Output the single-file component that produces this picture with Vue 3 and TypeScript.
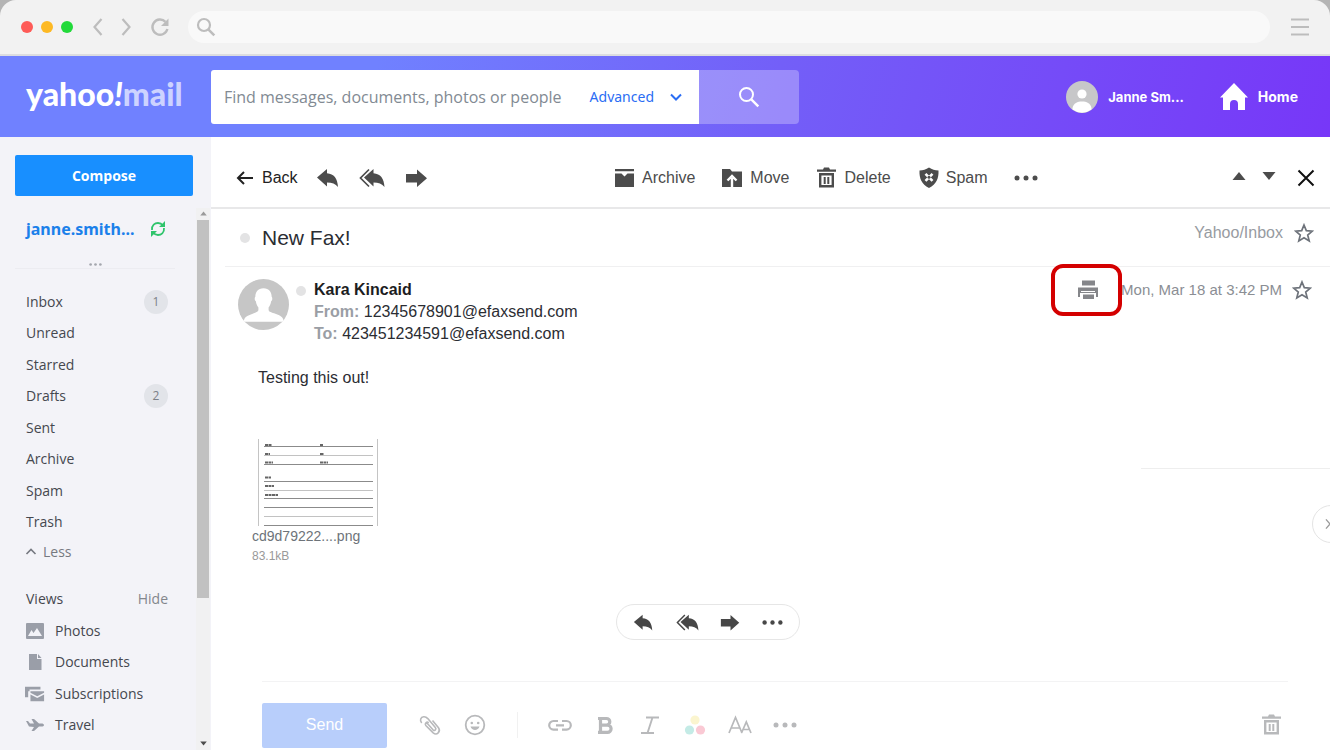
<script setup lang="ts">
import { ref } from 'vue'

interface Folder {
  name: string
  count?: number
}

interface Tool {
  icon: string
  label: string
}

const folders: Folder[] = [
  { name: 'Inbox', count: 1 },
  { name: 'Unread' },
  { name: 'Starred' },
  { name: 'Drafts', count: 2 },
  { name: 'Sent' },
  { name: 'Archive' },
  { name: 'Spam' },
  { name: 'Trash' },
]

const views: Tool[] = [
  { icon: 'photo', label: 'Photos' },
  { icon: 'document', label: 'Documents' },
  { icon: 'subscriptions', label: 'Subscriptions' },
  { icon: 'plane', label: 'Travel' },
]

const replyTools: Tool[] = [
  { icon: 'reply', label: 'Reply' },
  { icon: 'reply-all', label: 'Reply all' },
  { icon: 'forward', label: 'Forward' },
]

const actions: Tool[] = [
  { icon: 'archive', label: 'Archive' },
  { icon: 'move', label: 'Move' },
  { icon: 'trash', label: 'Delete' },
  { icon: 'spam', label: 'Spam' },
]

const formatTools: Tool[] = [
  { icon: 'link', label: 'Insert link' },
  { icon: 'bold', label: 'Bold' },
  { icon: 'italic', label: 'Italic' },
  { icon: 'colors', label: 'Colors' },
  { icon: 'font', label: 'Font' },
  { icon: 'dots', label: 'More formatting' },
]

const query = ref('')
const address = ref('')
</script>

<template>
  <div class="window">
    <svg class="sprite" aria-hidden="true">
      <symbol id="chev-left" viewBox="0 0 24 24"><path d="M15.500 4 8.500 12l7 8" fill="none" stroke="currentColor" stroke-width="2.200" /></symbol>
      <symbol id="chev-right" viewBox="0 0 24 24"><path d="m8.500 4 7 8-7 8" fill="none" stroke="currentColor" stroke-width="2.200" /></symbol>
      <symbol id="chev-down" viewBox="0 0 24 24"><path d="m7 9.500 5 5 5-5" fill="none" stroke="currentColor" stroke-width="2" /></symbol>
      <symbol id="chev-up" viewBox="0 0 12 12"><path d="m1.500 8 4.500-4.500L10.500 8" fill="none" stroke="currentColor" stroke-width="1.600" /></symbol>
      <symbol id="reload" viewBox="0 0 24 24">
        <path d="M17.500 6.800A7.600 7.600 0 1 0 19.400 14" fill="none" stroke="currentColor" stroke-width="2.400" />
        <path d="M20.500 3.500v7.500H13z" fill="currentColor" />
      </symbol>
      <symbol id="search" viewBox="0 0 24 24">
        <circle cx="9.500" cy="9.500" r="6.500" fill="none" stroke="currentColor" stroke-width="2" />
        <path d="m14.300 14.300 7 7" fill="none" stroke="currentColor" stroke-width="2.400" />
      </symbol>
      <symbol id="search-bold" viewBox="0 0 20 20">
        <circle cx="8" cy="8" r="6" fill="none" stroke="currentColor" stroke-width="2.200" />
        <path d="m12.300 12.300 6 6" fill="none" stroke="currentColor" stroke-width="2.600" />
      </symbol>
      <symbol id="menu" viewBox="0 0 24 24"><path d="M3 4.500h18M3 12h18M3 19.500h18" stroke="currentColor" stroke-width="2" /></symbol>
      <symbol id="home" viewBox="0 0 28 28"><path d="M14 0 28 14.500h-3V27h-7v-6a4 4 0 0 0-8 0v6H3V14.500H0z" fill="currentColor" /></symbol>
      <symbol id="person" viewBox="0 0 32 32">
        <circle cx="16" cy="16" r="16" fill="#c7c7c9" />
        <circle cx="16" cy="13" r="4.600" fill="#fff" />
        <path d="M6.500 28.500V27c1-5 5-6.500 9.500-6.500s8.500 1.500 9.500 6.500v1.500a16 16 0 0 1-19 0z" fill="#fff" />
      </symbol>
      <symbol id="sender" viewBox="0 0 50 50">
        <circle cx="25" cy="25" r="25" fill="#c6c6c6" />
        <path d="M25 9c5.500 0 8 3.500 8 8.500 1 1 .8 3.500-.5 4.200-.4 2.700-1.300 4.600-2.500 6.300v2.500c0 3.500 13 3 14.500 9.500q0 2-1.500 2H7Q5.500 42 6 40c1.500-6 14-6 14-9.500V28c-1.200-1.700-2.100-3.600-2.500-6.300-1.300-.7-1.500-3.200-.5-4.200C17 12.500 19.500 9 25 9z" fill="#fff" />
      </symbol>
      <symbol id="sync" viewBox="0 0 18 18">
        <path d="M3 10C2.500 5 6 3 9 3c2.200 0 3.800 1 5 2.500M15 8c.5 5-3 7-6 7-2.200 0-3.800-1-5-2.500" fill="none" stroke="currentColor" stroke-width="1.800" />
        <path d="M16 1v6h-6zM2 17v-6h6z" fill="currentColor" />
      </symbol>
      <symbol id="photo" viewBox="0 0 20 20">
        <rect x="1" y="2" width="18" height="16" rx="1" fill="currentColor" />
        <path d="m3 15 3.500-6 2 3L12 7l5 8z" fill="#f3f3f8" />
      </symbol>
      <symbol id="document" viewBox="0 0 20 20"><path d="M4 2h8v5h4.500v11H4zM13 2l3.500 4H13z" fill="currentColor" /></symbol>
      <symbol id="subscriptions" viewBox="0 0 22 20">
        <path d="M0 2h17v3H5v2H3.500v6.500H0zM6 7h15v1.500l-7.500 4-7.500-4zM6 10.500l7.500 4 7.500-4V18H6z" fill="currentColor" />
      </symbol>
      <symbol id="plane" viewBox="0 0 20 20"><path d="M1 6h2l2 2.500h4L6.500 4H9l5 4.500h3.500q1.500.5 1.500 1.500t-1.500 1.500H14L9 16H6.500L9 12 4 11.500z" fill="currentColor" /></symbol>
      <symbol id="back" viewBox="0 0 18 18"><path d="M8 3 2 9l6 6M2 9h15" fill="none" stroke="currentColor" stroke-width="2" /></symbol>
      <symbol id="reply" viewBox="0 0 24 24"><path d="M1 11.500 11 3v4.200c7 .6 10.500 5 11 13.800-2.400-3.400-6-4.600-11-4.600v4z" fill="currentColor" /></symbol>
      <symbol id="reply-all" viewBox="0 0 28 24">
        <path d="M11 3.500 2.500 12l8.500 8.500" fill="none" stroke="currentColor" stroke-width="1.700" />
        <path d="M6 11.500 15.500 3v4.200c7 .6 10.500 5 11 13.800-2.400-3.400-6-4.600-11-4.600v4z" fill="currentColor" />
      </symbol>
      <symbol id="forward" viewBox="0 0 24 24"><path d="M1 8h11V3.500l10 8.700L12 21v-4.500H1z" fill="currentColor" /></symbol>
      <symbol id="archive" viewBox="0 0 24 24"><path d="M2 3h19v2.200H2zM2 7.500h6.500l3 3 3-3H21V21H2z" fill="currentColor" /></symbol>
      <symbol id="move" viewBox="0 0 24 24">
        <path d="M1 3h8l2 2.500h10V21H1z" fill="currentColor" />
        <path d="M11 21v-9M6.500 14.500 11 10l4.500 4.500" fill="none" stroke="#fff" stroke-width="2.400" />
      </symbol>
      <symbol id="trash" viewBox="0 0 24 24">
        <path d="M2 3.500h6l1-2h5l1 2h6v2.200H2z" fill="currentColor" />
        <path d="M5.200 8.200h12.600v12H5.200z" fill="none" stroke="currentColor" stroke-width="2.400" />
        <path d="M9.700 11v7M13.300 11v7" stroke="currentColor" stroke-width="2" />
      </symbol>
      <symbol id="spam" viewBox="0 0 24 24">
        <path d="M12 1.500c3 2 6 2.800 9.500 3 .3 8-2 13.500-9.500 17.500-7.500-4-9.800-9.500-9.500-17.500 3.500-.2 6.500-1 9.500-3z" fill="currentColor" />
        <path d="m8.500 7.800 7 7m0-7-7 7" stroke="#fff" stroke-width="2.600" />
        <circle cx="12" cy="11.300" r="1.500" fill="currentColor" />
      </symbol>
      <symbol id="dots" viewBox="0 0 24 24"><g fill="currentColor"><circle cx="3" cy="12" r="2.500" /><circle cx="12" cy="12" r="2.500" /><circle cx="21" cy="12" r="2.500" /></g></symbol>
      <symbol id="tri-up" viewBox="0 0 14 10"><path d="M7 1 13.500 9H.5z" fill="currentColor" /></symbol>
      <symbol id="tri-down" viewBox="0 0 14 10"><path d="M7 9 13.500 1H.5z" fill="currentColor" /></symbol>
      <symbol id="close" viewBox="0 0 18 18"><path d="m1.500 1.500 15 15m0-15-15 15" stroke="currentColor" stroke-width="2" /></symbol>
      <symbol id="star" viewBox="0 0 20 20"><path d="m10 2 2.300 5.600 6 .5-4.600 3.900 1.500 5.900L10 14.700 4.800 17.900l1.500-5.900L1.700 8.100l6-.5z" fill="none" stroke="currentColor" stroke-width="1.700" /></symbol>
      <symbol id="print" viewBox="0 0 22 22">
        <path d="M5 1.500h13v5H5zM1 8.500h20V18h-2v-6H3v6H1z" fill="currentColor" />
        <path d="M3 10.500h16V14H3zM6 15.500h11V20H6z" fill="currentColor" />
        <path d="M4 12.500h14" stroke="#fff" />
      </symbol>
      <symbol id="clip" viewBox="0 0 24 24">
        <path d="m8.500 9.500 6.500 7.300c1.800 1.600 3.800-.4 2.300-2.300L9.800 5.600C7.300 2.800 3.600 3.400 2.700 6c-.5 1.500 0 2.800 1 4M14.500 7.500l6 7.200c2.600 3.800-1.700 8.200-5.300 5.100L7.800 12.500C6.300 10.500 8.700 8 10.700 9.800" fill="none" stroke="currentColor" stroke-width="1.600" />
      </symbol>
      <symbol id="smile" viewBox="0 0 24 24">
        <circle cx="12" cy="12" r="9.300" fill="none" stroke="currentColor" stroke-width="1.800" />
        <circle cx="8.800" cy="10" r="1.300" fill="currentColor" />
        <circle cx="15.200" cy="10" r="1.300" fill="currentColor" />
        <path d="M7.500 13.500h9c-1.200 4.600-7.800 4.600-9 0z" fill="currentColor" />
      </symbol>
      <symbol id="link" viewBox="0 0 24 24"><path d="M10 8H5.500a4.300 4.300 0 0 0 0 8.600H10M14 8h4.500a4.300 4.300 0 0 1 0 8.600H14M8 12.300h8" fill="none" stroke="currentColor" stroke-width="2.200" /></symbol>
      <symbol id="bold" viewBox="0 0 24 24"><path d="M5 5.500h8.500a3.300 3.300 0 0 1 0 6.600H7.500h7a3.600 3.600 0 0 1 0 7.200H5M7.500 5.500v13.500" fill="none" stroke="currentColor" stroke-width="3.200" /></symbol>
      <symbol id="italic" viewBox="0 0 24 24"><path d="M8 4.500h13M3 20h13M14.500 4.500 9.500 20" fill="none" stroke="currentColor" stroke-width="1.900" /></symbol>
      <symbol id="colors" viewBox="0 0 24 24">
        <circle cx="12" cy="7" r="4.600" fill="#fbf5cf" />
        <circle cx="6.500" cy="17" r="4.600" fill="#c4ebe6" />
        <circle cx="17.500" cy="17" r="4.600" fill="#fac9d4" />
      </symbol>
      <symbol id="font" viewBox="0 0 24 24"><path d="M1 20 7.500 4.500 14 20M3.200 15h8.600M13.500 20 18.300 9l4.700 11M15.200 16.500h6" fill="none" stroke="currentColor" stroke-width="1.700" /></symbol>
    </svg>

    <div class="chrome">
      <div class="lights"><i class="red"></i><i class="amber"></i><i class="green"></i></div>
      <button class="icon-btn nav" aria-label="Previous page"><svg><use href="#chev-left" /></svg></button>
      <button class="icon-btn nav" aria-label="Next page"><svg><use href="#chev-right" /></svg></button>
      <button class="icon-btn nav reload" aria-label="Reload"><svg><use href="#reload" /></svg></button>
      <label class="address">
        <svg><use href="#search-bold" /></svg>
        <input v-model="address" type="text" aria-label="Address" />
      </label>
      <button class="icon-btn nav" aria-label="Menu"><svg><use href="#menu" /></svg></button>
    </div>

    <header class="header">
      <a class="logo" href="#">yahoo<em>!</em><span>mail</span></a>
      <form class="search" @submit.prevent>
        <div class="search-box">
          <input v-model="query" type="text" aria-label="Search mail" placeholder="Find messages, documents, photos or people" />
          <button type="button" class="advanced">Advanced <svg><use href="#chev-down" /></svg></button>
        </div>
        <button class="search-btn" aria-label="Search"><svg><use href="#search" /></svg></button>
      </form>
      <nav class="user-nav">
        <a class="user" href="#"><svg class="face"><use href="#person" /></svg>Janne Sm...</a>
        <a href="#"><svg class="house"><use href="#home" /></svg>Home</a>
      </nav>
    </header>

    <div class="body">
      <aside class="sidebar">
        <button class="compose">Compose</button>
        <div class="side-scroll">
          <div class="side-content">
            <div class="account">
              <a href="#">janne.smith...</a>
              <button class="icon-btn sync" aria-label="Refresh"><svg><use href="#sync" /></svg></button>
            </div>
            <div class="divider"><svg><use href="#dots" /></svg></div>
            <ul class="rows folders">
              <li v-for="f in folders" :key="f.name">
                <a href="#">{{ f.name }}</a>
                <span v-if="f.count" class="count">{{ f.count }}</span>
              </li>
            </ul>
            <button class="less"><svg><use href="#chev-up" /></svg>Less</button>
            <div class="views-head"><span>Views</span><button>Hide</button></div>
            <ul class="rows views">
              <li v-for="v in views" :key="v.label">
                <a href="#"><svg><use :href="'#' + v.icon" /></svg>{{ v.label }}</a>
              </li>
            </ul>
          </div>
          <div class="scrollbar" aria-hidden="true">
            <svg class="up"><use href="#tri-up" /></svg>
            <div class="track"><div class="thumb"></div></div>
            <svg><use href="#tri-down" /></svg>
          </div>
        </div>
      </aside>

      <main class="main">
        <div class="toolbar">
          <div class="tools-left">
            <button class="back"><svg><use href="#back" /></svg>Back</button>
            <button v-for="t in replyTools" :key="t.icon" class="icon-btn" :class="t.icon" :aria-label="t.label">
              <svg><use :href="'#' + t.icon" /></svg>
            </button>
          </div>
          <div class="tools-mid">
            <button v-for="a in actions" :key="a.icon" class="action"><svg><use :href="'#' + a.icon" /></svg>{{ a.label }}</button>
            <button class="icon-btn" aria-label="More"><svg><use href="#dots" /></svg></button>
          </div>
          <div class="tools-right">
            <button class="icon-btn tri" aria-label="Previous message"><svg><use href="#tri-up" /></svg></button>
            <button class="icon-btn tri" aria-label="Next message"><svg><use href="#tri-down" /></svg></button>
            <button class="icon-btn close" aria-label="Close"><svg><use href="#close" /></svg></button>
          </div>
        </div>

        <div class="subject">
          <i class="dot"></i>
          <h1>New Fax!</h1>
          <span class="folder">Yahoo/Inbox</span>
          <button class="icon-btn star" aria-label="Star conversation"><svg><use href="#star" /></svg></button>
        </div>

        <article class="message">
          <div class="msg-head">
            <svg class="sender"><use href="#sender" /></svg>
            <i class="dot"></i>
            <div class="meta">
              <strong>Kara Kincaid</strong>
              <div><b>From:</b> 12345678901@efaxsend.com</div>
              <div><b>To:</b> 423451234591@efaxsend.com</div>
            </div>
            <div class="stamp">
              <button class="icon-btn print" aria-label="Print"><svg><use href="#print" /></svg></button>
              <time>Mon, Mar 18 at 3:42 PM</time>
              <button class="icon-btn star" aria-label="Star message"><svg><use href="#star" /></svg></button>
            </div>
          </div>
          <p class="text">Testing this out!</p>
          <figure class="attachment">
            <svg viewBox="0 0 120 87">
              <path d="M.5 0v87M119.500 0v87" stroke="#c4c4c4" />
              <path d="M6 7.500h109M6 25.500h109M6 42.500h109M6 59.500h109M6 68.500h109M6 86.500h109" stroke="#8b8b8b" />
              <path d="M6 16.500h109M6 51.500h109M6 77.500h109" stroke="#c2c2c2" />
              <path d="M7 6h7M62 6h3M7 15h5M62 15h4M7 23.500h8M62 23.500h8M7 38.500h6M7 47h9M7 56h13" stroke="#666" stroke-width="2" stroke-dasharray="3 .5" />
            </svg>
            <figcaption>cd9d79222....png<small>83.1kB</small></figcaption>
          </figure>
          <div class="pill">
            <button v-for="t in replyTools" :key="t.icon" class="icon-btn" :class="t.icon" :aria-label="t.label">
              <svg><use :href="'#' + t.icon" /></svg>
            </button>
            <button class="icon-btn" aria-label="More"><svg><use href="#dots" /></svg></button>
          </div>
        </article>

        <footer class="composer">
          <button class="send">Send</button>
          <button class="icon-btn" aria-label="Attach file"><svg><use href="#clip" /></svg></button>
          <button class="icon-btn" aria-label="Emoji"><svg><use href="#smile" /></svg></button>
          <span class="bar"></span>
          <button v-for="t in formatTools" :key="t.icon" class="icon-btn" :aria-label="t.label">
            <svg><use :href="'#' + t.icon" /></svg>
          </button>
          <button class="icon-btn discard" aria-label="Discard draft"><svg><use href="#trash" /></svg></button>
        </footer>

        <div class="panel-edge"></div>
        <button class="expand" aria-label="Show panel"><svg><use href="#chev-right" /></svg></button>
      </main>
    </div>
  </div>
</template>

<style>
body {
  margin: 0;
}
</style>

<style scoped>
.window {
  display: flex;
  flex-direction: column;
  height: 100vh;
  min-height: 750px;
  overflow: hidden;
  background: #b4b4b4;
  color: #2b2d33;
  font: 16px/22px "Liberation Sans", Arial, sans-serif;
}
.window *,
.window *::after {
  box-sizing: border-box;
}
.sprite {
  position: absolute;
  width: 0;
  height: 0;
}
button {
  display: flex;
  align-items: center;
  padding: 0;
  border: 0;
  background: none;
  color: inherit;
  font: inherit;
}
a {
  color: inherit;
  text-decoration: none;
}
input {
  min-width: 0;
  border: 0;
  padding: 0;
  background: none;
  outline: 0;
}
svg {
  display: block;
  flex: none;
}
.icon-btn {
  justify-content: center;
  flex: none;
}
.icon-btn svg {
  width: 24px;
  height: 24px;
}

/* browser frame */
.chrome {
  display: flex;
  align-items: center;
  flex: none;
  height: 56px;
  padding: 0 18px 0 21px;
  border-bottom: 2px solid #dcdde0;
  border-radius: 16px 16px 0 0;
  background: #f2f2f2;
  color: #bdbdbd;
}
.lights {
  display: flex;
  gap: 8px;
  margin-right: 13px;
}
.lights i {
  width: 12px;
  height: 12px;
  border-radius: 50%;
}
.red {
  background: #fe5b57;
}
.amber {
  background: #fdb924;
}
.green {
  background: #22da3a;
}
.nav {
  margin-right: 4px;
}
.reload {
  margin: 0 16px 0 6px;
}
.address {
  display: flex;
  align-items: center;
  flex: 1;
  height: 32px;
  margin-right: 18px;
  padding: 0 8px;
  border-radius: 16px;
  background: #f9f9f9;
}
.address svg {
  width: 20px;
  height: 20px;
}
.address input {
  flex: 1;
}
.chrome > .nav:last-child {
  margin: 0;
}

/* mail header */
.header {
  display: flex;
  align-items: center;
  flex: none;
  height: 81px;
  padding-right: 32px;
  background: linear-gradient(105deg, #7081ff 0%, #7081ff 28%, #735ff8 58%, #7737f8 100%);
  color: #fff;
}
.logo {
  width: 211px;
  margin-bottom: 6px;
  padding-left: 26px;
  font: 900 32px/36px Lato, sans-serif;
  white-space: nowrap;
}
.logo span {
  color: #cdd3ff;
}
.search {
  display: flex;
  flex: none;
  width: 588px;
  height: 54px;
}
.search-box {
  display: flex;
  flex: 1;
  align-items: center;
  padding: 0 11px 0 13px;
  border-radius: 3px 0 0 3px;
  background: #fff;
}
.search-box input {
  flex: 1;
  color: #555;
  font: 16px/22px "Open Sans", sans-serif;
}
.search-box input::placeholder {
  color: #828a93;
  opacity: 1;
}
.advanced {
  gap: 10px;
  color: #2a6df4;
  font: 14px/20px "Noto Sans", sans-serif;
}
.advanced svg {
  width: 24px;
  height: 24px;
}
.search-btn {
  justify-content: center;
  width: 100px;
  border-radius: 0 4px 4px 0;
  background: rgba(255, 255, 255, 0.28);
}
.search-btn svg {
  width: 24px;
  height: 24px;
}
.user-nav {
  display: flex;
  gap: 36px;
  margin-left: auto;
  font: 700 14px/20px Inter, sans-serif;
}
.user-nav a {
  display: flex;
  align-items: center;
  gap: 10px;
}
.user-nav .user {
  font-size: 13px;
}
.face {
  width: 32px;
  height: 32px;
}
.house {
  width: 28px;
  height: 28px;
}

/* sidebar */
.body {
  display: flex;
  flex: 1;
  min-height: 0;
}
.sidebar {
  display: flex;
  flex-direction: column;
  flex: none;
  width: 211px;
  background: #f3f3f8;
  color: #45484f;
  font: 14px/20px "Open Sans", sans-serif;
}
.compose {
  justify-content: center;
  flex: none;
  height: 41px;
  margin: 18px 18px 12px 15px;
  border-radius: 2px;
  background: #188fff;
  color: #fff;
  font-weight: 700;
}
.side-scroll {
  display: flex;
  flex: 1;
  min-height: 0;
}
.side-content {
  flex: 1;
}
.account {
  display: flex;
  align-items: center;
  justify-content: space-between;
  height: 42px;
  padding: 0 29px 0 26px;
  color: #1b80ea;
  font-family: "Noto Sans", sans-serif;
  font-size: 16px;
  font-weight: 700;
}
.sync {
  color: #2fc46c;
}
.sync svg {
  width: 18px;
  height: 18px;
}
.divider {
  display: flex;
  justify-content: center;
  align-items: center;
  height: 19px;
  margin: 0 21px 17px 15px;
  padding-top: 10px;
  border-bottom: 1px solid #ececf1;
  color: #a4a7ae;
}
.divider svg {
  width: 13px;
  height: 13px;
}
.rows {
  display: grid;
  grid-auto-rows: 1fr;
  margin: 0;
  padding: 0 28px 0 26px;
  list-style: none;
}
.folders {
  height: 252px;
}
.views {
  height: 126px;
}
.rows li,
.rows a {
  display: flex;
  align-items: center;
  justify-content: space-between;
}
.views a {
  gap: 10px;
}
.views svg {
  width: 20px;
  height: 20px;
  color: #9a9ea8;
}
.views {
  padding-left: 25px;
}
.count {
  width: 24px;
  height: 24px;
  border-radius: 50%;
  background: #e2e4e9;
  color: #7c8087;
  font-size: 12px;
  line-height: 24px;
  text-align: center;
}
.less {
  gap: 6px;
  height: 28px;
  padding-left: 25px;
  color: #767981;
}
.less svg {
  width: 12px;
  height: 12px;
}
.views-head {
  display: flex;
  align-items: center;
  justify-content: space-between;
  height: 32px;
  margin-top: 17px;
  padding: 0 28px 0 26px;
}
.views-head button {
  color: #83868d;
}
.scrollbar {
  display: flex;
  flex-direction: column;
  align-items: center;
  width: 14px;
  margin-right: 1px;
  background: #f1f1f2;
  color: #4c4c4c;
}
.scrollbar svg {
  width: 7px;
  height: 5px;
  margin: 3px 0 4px;
}
.scrollbar .up {
  color: #9a9a9a;
}
.track {
  flex: 1;
  width: 12px;
}
.thumb {
  height: 73%;
  background: #c1c1c1;
}

/* message pane */
.main {
  position: relative;
  display: flex;
  flex: 1;
  flex-direction: column;
  min-width: 0;
  background: #fff;
}
.toolbar {
  display: flex;
  align-items: center;
  flex: none;
  height: 72px;
  padding: 12px 15px 0 25px;
  border-bottom: 2px solid #e8e8e9;
  color: #4c4c4c;
}
.tools-left {
  display: flex;
  align-items: center;
  width: 377px;
}
.back {
  gap: 8px;
  margin-right: 18px;
  color: #222;
}
.back svg {
  width: 18px;
  height: 18px;
}
.reply-all svg {
  width: 28px;
}
.tools-left .reply-all {
  margin: 0 19px 0 18px;
}
.tools-mid {
  display: flex;
  align-items: center;
  gap: 26px;
}
.action {
  gap: 5px;
}
.tools-right {
  display: flex;
  align-items: center;
  gap: 16px;
  margin-left: auto;
}
.action svg {
  width: 24px;
  height: 24px;
}
.tri {
  margin-bottom: 5px;
}
.tri svg {
  width: 14px;
  height: 10px;
}
.close {
  margin-left: 5px;
  color: #111;
}
.close svg {
  width: 18px;
  height: 18px;
}
.subject {
  display: flex;
  align-items: center;
  flex: none;
  height: 58px;
  margin-left: 14px;
  padding: 0 16px 0 15px;
  border-bottom: 1px solid #f0f0f1;
}
.dot {
  flex: none;
  width: 10px;
  height: 10px;
  border-radius: 50%;
  background: #e3e3e4;
}
.subject h1 {
  flex: 1;
  margin: 0 0 0 12px;
  font-size: 21px;
  font-weight: 400;
  line-height: 26px;
}
.folder {
  margin: 0 11px 10px 0;
  color: #979ba1;
}
.subject .star {
  margin-bottom: 10px;
}
.star {
  color: #6e737b;
}
.star svg {
  width: 20px;
  height: 20px;
}
.message {
  padding: 12px 18px 0 27px;
}
.msg-head {
  display: flex;
  align-items: flex-start;
}
.sender {
  width: 51px;
  height: 51px;
}
.msg-head .dot {
  margin: 7px 8px 0 7px;
}
.meta {
  flex: 1;
}
.meta strong {
  color: #1d1d1f;
}
.meta b {
  color: #9a9ea5;
}
.stamp {
  display: flex;
  align-items: center;
  color: #8b8e94;
  font-size: 15px;
}
.print {
  position: relative;
  width: 63px;
  height: 22px;
  margin-right: 3px;
  color: #85868a;
}
.print svg {
  width: 22px;
  height: 22px;
  margin-left: 3px;
}
.print::after {
  content: "";
  position: absolute;
  inset: -15px -4px;
  border: 4px solid #d40000;
  border-radius: 12px;
}
.stamp .star {
  margin-left: 10px;
}
.text {
  margin: 22px 0 50px 20px;
}
.attachment {
  margin: 0 0 0 14px;
}
.attachment svg {
  width: 120px;
  height: 87px;
  margin-left: 6px;
}
.attachment figcaption {
  color: #6d7379;
  font-size: 14px;
  line-height: 20px;
}
.attachment small {
  display: block;
  color: #999;
  font-size: 12px;
}
.pill {
  display: flex;
  align-items: center;
  justify-content: space-between;
  width: 184px;
  height: 36px;
  margin: 38px 0 0 378px;
  padding: 0 16px;
  border: 1px solid #e6e6e6;
  border-radius: 18px;
  color: #474747;
}
.pill svg {
  width: 21px;
  height: 21px;
}
.pill .reply-all svg {
  width: 25px;
}
.composer {
  display: flex;
  align-items: center;
  flex: none;
  height: 69px;
  margin: auto 42px 0 51px;
  padding: 18px 4px 0 0;
  border-top: 1px solid #f3f3f4;
  color: #b8b9bb;
}
.send {
  justify-content: center;
  width: 125px;
  height: 45px;
  margin-right: 30px;
  border-radius: 2px;
  background: #b8cefb;
  color: #fff;
}
.composer .icon-btn {
  width: 25px;
  margin-right: 20px;
}
.bar {
  width: 1px;
  height: 26px;
  margin: 0 29px 0 10px;
  background: #f1f1f1;
}
.composer .discard {
  width: 24px;
  margin: 0 0 0 auto;
}
.panel-edge {
  position: absolute;
  top: 331px;
  right: 0;
  width: 189px;
  border-top: 1px solid #eee;
}
.expand {
  position: absolute;
  top: 368px;
  right: -20px;
  width: 38px;
  height: 38px;
  padding-left: 8px;
  border: 1px solid #e4e4e4;
  border-radius: 50%;
  color: #999;
}
.expand svg {
  width: 14px;
  height: 14px;
}
</style>
